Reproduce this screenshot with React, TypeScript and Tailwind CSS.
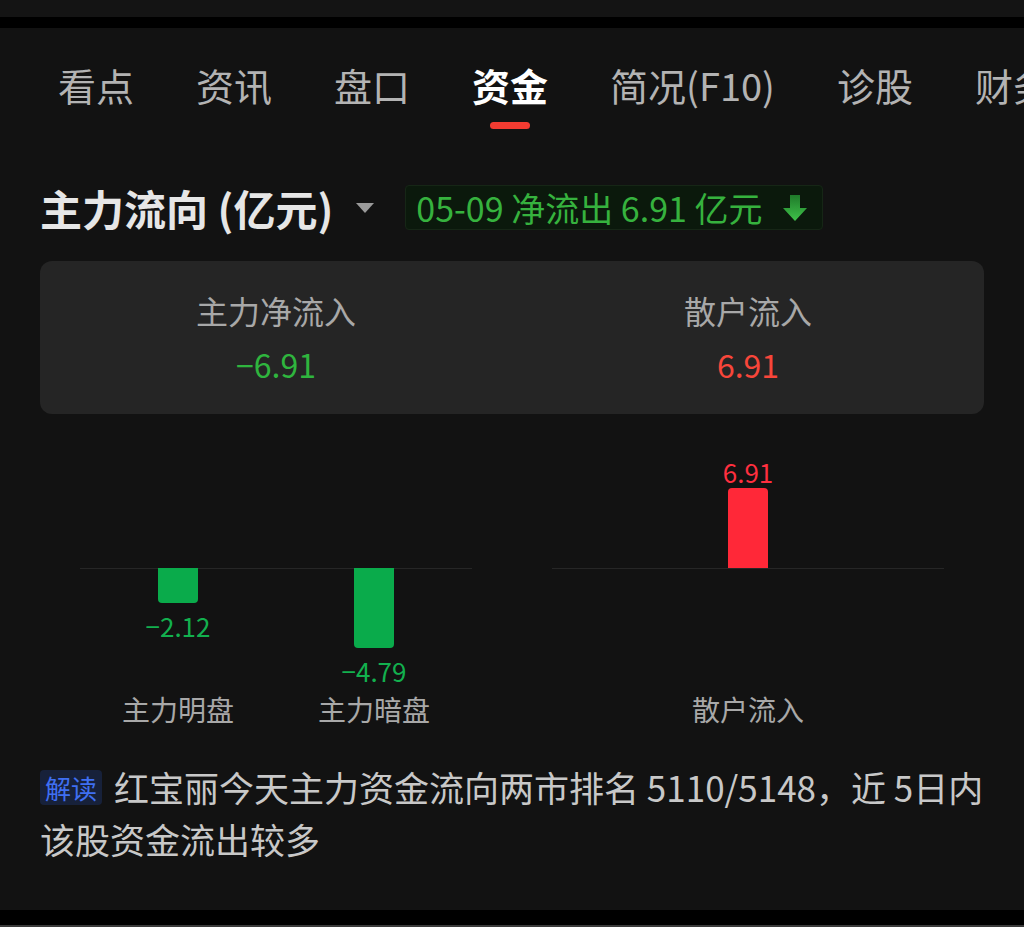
import React from 'react';

const font = { fontFamily: '"Noto Sans CJK SC", "Noto Sans", sans-serif' };

const tabs = ['看点', '资讯', '盘口', '资金', '简况(F10)', '诊股', '财务'];

type Bar = { label: string; value: number };

const mainBars: Bar[] = [
  { label: '主力明盘', value: -2.12 },
  { label: '主力暗盘', value: -4.79 },
];
const retailBars: Bar[] = [{ label: '散户流入', value: 6.91 }];

const DownArrow = () => (
  <svg width="30" height="30" viewBox="0 0 30 30">
    <defs>
      <linearGradient id="arr" x1="0" y1="0" x2="0" y2="1">
        <stop offset="0" stopColor="#1f7a2a" />
        <stop offset="1" stopColor="#3fc24a" />
      </linearGradient>
    </defs>
    <path d="M10 2 H20 V15 H27 L15 28 L3 15 H10 Z" fill="url(#arr)" />
  </svg>
);

const Chart = ({ bars, max }: { bars: Bar[]; max: number }) => {
  const cols = bars.length === 2 ? 'grid-cols-2' : 'grid-cols-1';
  return (
    <div className="w-[392px] flex flex-col">
      <div className={`grid ${cols} h-[112px]`}>
        {bars.map((b) => (
          <div key={b.label} className="flex flex-col items-center justify-end">
            {b.value > 0 && (
              <>
                <div className="text-[26px] leading-[30px] text-[#ff2f3f] mb-px">{b.value.toFixed(2)}</div>
                <div className="w-10 bg-[#ff2838] rounded-t-[4px]" style={{ height: (b.value / max) * 80 }} />
              </>
            )}
          </div>
        ))}
      </div>
      <div className="h-px bg-[#262626]" />
      <div className={`grid ${cols} h-[123px]`}>
        {bars.map((b) => (
          <div key={b.label} className="flex flex-col items-center -mt-px">
            {b.value < 0 && (
              <>
                <div className="w-10 bg-[#0aab4b] rounded-b-[4px]" style={{ height: (-b.value / max) * 80 }} />
                <div className="text-[26px] leading-[30px] text-[#12b04e] mt-2">−{(-b.value).toFixed(2)}</div>
              </>
            )}
          </div>
        ))}
      </div>
      <div className={`grid ${cols}`}>
        {bars.map((b) => (
          <div key={b.label} className="text-center text-[28px] leading-[34px] text-[#a8a8a8]">
            {b.label}
          </div>
        ))}
      </div>
    </div>
  );
};

export default function App() {
  return (
    <div className="w-[1024px] h-[927px] bg-[#121212] flex flex-col overflow-hidden" style={font}>
      <div className="h-[17px] bg-[#141414]" />
      <div className="h-[11px] bg-black" />

      <main className="flex-1 flex flex-col px-10">
        {/* tabs */}
        <div className="flex gap-[62px] pt-[34px] pl-[18px] whitespace-nowrap">
          {tabs.map((t) => (
            <div key={t} className="flex flex-col items-center">
              <span
                className={`text-[38px] leading-[46px] ${
                  t === '资金' ? 'text-white font-bold' : 'text-[#b3b3b3]'
                }`}
              >
                {t}
              </span>
              {t === '资金' ? (
                <div className="mt-[14px] w-10 h-[7px] rounded-full bg-[#f23b31]" />
              ) : (
                <div className="mt-[14px] h-[7px]" />
              )}
            </div>
          ))}
        </div>

        {/* heading */}
        <div className="flex items-center mt-[56px] h-[45px]">
          <span className="text-[42px] font-bold text-[#e6e6e6] leading-none">主力流向 (亿元)</span>
          <svg width="18" height="10" viewBox="0 0 18 10" className="ml-[23px]">
            <polygon points="0,0 18,0 9,10" fill="#9a9a9a" />
          </svg>
          <div className="ml-[31px] h-[45px] flex items-center gap-[18px] pl-[10px] pr-[12px] rounded-[4px] bg-[#0b190c] border border-[#162616]">
            <span className="text-[34px] leading-none text-[#36b23e]">05-09 净流出 6.91 亿元</span>
            <DownArrow />
          </div>
        </div>

        {/* summary card */}
        <div className="mt-[31px] h-[153px] rounded-xl bg-[#252525] grid grid-cols-2 pt-[27px]">
          <div className="flex flex-col items-center">
            <span className="text-[32px] leading-[44px] text-[#a8a8a8]">主力净流入</span>
            <span className="text-[32px] leading-[44px] mt-[10px] text-[#2fb53e]">−6.91</span>
          </div>
          <div className="flex flex-col items-center">
            <span className="text-[32px] leading-[44px] text-[#a8a8a8]">散户流入</span>
            <span className="text-[32px] leading-[44px] mt-[10px] text-[#f8463a]">6.91</span>
          </div>
        </div>

        {/* charts */}
        <div className="mt-[42px] flex justify-between px-10">
          <Chart bars={mainBars} max={4.79} />
          <Chart bars={retailBars} max={6.91} />
        </div>

        {/* interpretation */}
        <p className="mt-[35px] text-[35px] leading-[52px] text-[#c8c8c8]">
          <span className="inline-block align-[3px] mr-[12px] px-[5px] rounded-[4px] bg-[#17213a] text-[#3f6ff2] text-[26px] leading-[35px]">
            解读
          </span>
          红宝丽今天主力资金流向两市排名 5110/5148，近 5日内该股资金流出较多
        </p>
      </main>

      <div className="h-[15px] bg-black" />
      <div className="h-[2px] bg-[#3a3a3a]" />
    </div>
  );
}
